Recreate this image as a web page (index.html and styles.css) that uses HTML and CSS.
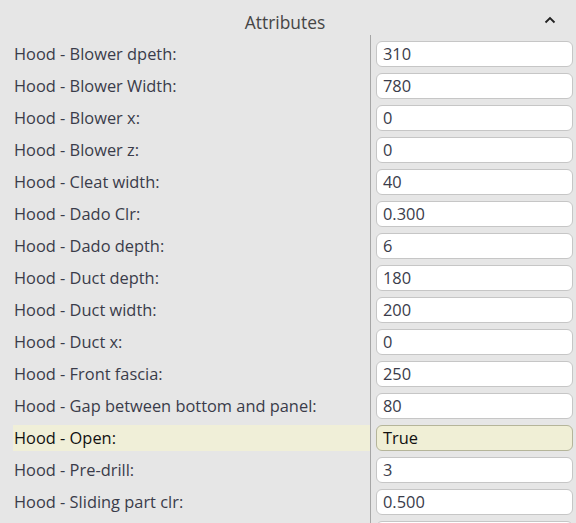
FILE: index.html
```html
<!DOCTYPE html>
<html>
<head>
<meta charset="utf-8">
<link rel="stylesheet" href="styles.css">
</head>
<body>
<div class="panel">
  <div class="header">
    <span class="title">Attributes</span>
    <svg class="chev" width="12" height="8" viewBox="0 0 12 8"><path d="M1.5 6.5 L6 2 L10.5 6.5" fill="none" stroke="#222" stroke-width="1.8"/></svg>
  </div>
  <div class="body">
    <div class="labels">
      <div class="lbl">Hood - Blower dpeth:</div>
      <div class="lbl">Hood - Blower Width:</div>
      <div class="lbl">Hood - Blower x:</div>
      <div class="lbl">Hood - Blower z:</div>
      <div class="lbl">Hood - Cleat width:</div>
      <div class="lbl">Hood - Dado Clr:</div>
      <div class="lbl">Hood - Dado depth:</div>
      <div class="lbl">Hood - Duct depth:</div>
      <div class="lbl">Hood - Duct width:</div>
      <div class="lbl">Hood - Duct x:</div>
      <div class="lbl">Hood - Front fascia:</div>
      <div class="lbl">Hood - Gap between bottom and panel:</div>
      <div class="lbl hl">Hood - Open:</div>
      <div class="lbl">Hood - Pre-drill:</div>
      <div class="lbl">Hood - Sliding part clr:</div>
      <div class="lbl"></div>
    </div>
    <div class="values">
      <div class="val">310</div>
      <div class="val">780</div>
      <div class="val">0</div>
      <div class="val">0</div>
      <div class="val">40</div>
      <div class="val">0.300</div>
      <div class="val">6</div>
      <div class="val">180</div>
      <div class="val">200</div>
      <div class="val">0</div>
      <div class="val">250</div>
      <div class="val">80</div>
      <div class="val hl">True</div>
      <div class="val">3</div>
      <div class="val">0.500</div>
      <div class="val"></div>
    </div>
  </div>
</div>
</body>
</html>
```
FILE: styles.css
```css
html, body {
  margin: 0;
  padding: 0;
  background: #e6e6e6;
  overflow: hidden;
}
body {
  font-family: "Open Sans", "Liberation Sans", sans-serif;
  font-size: 16.4px;
  color: #3a3c4a;
  width: 576px;
  height: 523px;
}
.header {
  position: relative;
  height: 35px;
  display: flex;
  align-items: center;
  justify-content: center;
}
.title {
  color: #454545;
  font-size: 17.4px;
  margin-left: -6px;
  margin-top: 9px;
}
.chev {
  position: absolute;
  right: 20px;
  top: 16px;
}
.body {
  display: flex;
}
.labels {
  width: 357px;
  padding-left: 13px;
  border-right: 1px solid #a6a6a6;
  padding-top: 6px;
  display: flex;
  flex-direction: column;
  gap: 6px;
  height: 500px;
}
.lbl {
  height: 26px;
  line-height: 26px;
  padding-left: 1px;
  white-space: nowrap;
}
.lbl.hl {
  background: #f0efd8;
  color: #111;
}
.values {
  padding-left: 5px;
  padding-top: 6px;
  width: 197px;
  display: flex;
  flex-direction: column;
  gap: 6px;
}
.val {
  box-sizing: border-box;
  height: 26px;
  line-height: 24px;
  border: 1px solid #c6c6c6;
  border-radius: 6px;
  background: #fff;
  padding-left: 6px;
}
.val.hl {
  background: #f0efd6;
  border-color: #b5b59a;
  color: #111;
}
```
